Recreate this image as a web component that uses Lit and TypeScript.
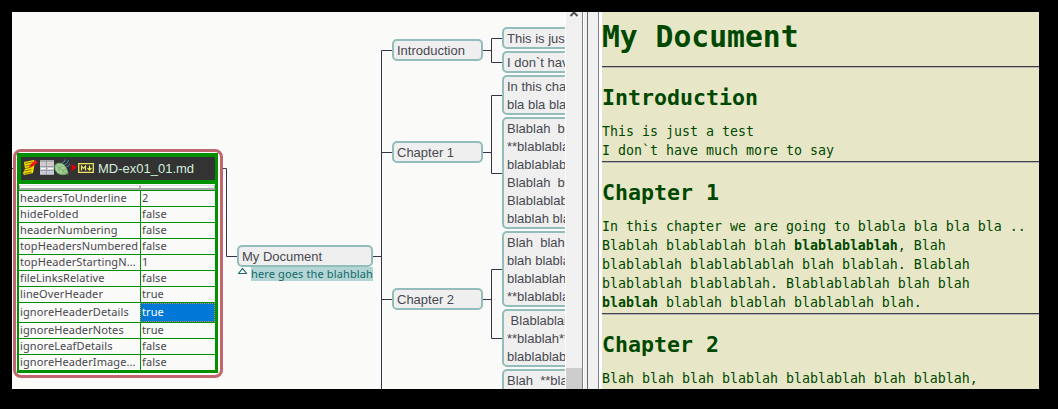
import { LitElement, html, css, svg } from "lit";
import { customElement } from "lit/decorators.js";

interface MapNode { x: number; y: number; w: number; lines: string[]; }

const NODES: MapNode[] = [
  { x: 225, y: 233, w: 136, lines: ["My Document"] },
  { x: 380, y: 27, w: 91, lines: ["Introduction"] },
  { x: 380, y: 129, w: 91, lines: ["Chapter 1"] },
  { x: 380, y: 276, w: 91, lines: ["Chapter 2"] },
  { x: 490, y: 15, w: 90, lines: ["This is just"] },
  { x: 490, y: 39, w: 90, lines: ["I don`t have"] },
  { x: 490, y: 63, w: 90, lines: ["In this chap", "bla bla bla"] },
  { x: 490, y: 105, w: 90, lines: ["Blablah  bl", "**blablabla", "blablablabl", "Blablah  bl", "Blablablab", "blablah blab"] },
  { x: 490, y: 219, w: 90, lines: ["Blah  blah", "blah blabla", "blablablah", "**blablabla"] },
  { x: 490, y: 297, w: 90, lines: [" Blablablah", "**blablah**", "blablablabl"] },
  { x: 490, y: 357, w: 90, lines: ["Blah  **bla", ""] },
];

const EDGES = [
  "M0 156.5H6", "M205 156.5H214.5V244.5H225",
  "M361 244.5H370", "M380 38.5H369.5V377", "M370 140.5H380", "M370 287.5H380",
  "M471 38.5H479", "M490 26.5H479.5V50.5H490",
  "M471 140.5H479", "M490 83.5H479.5V161.5H490",
  "M471 287.5H479", "M490 257.5H479.5V326.5H490",
];

const ATTRIBUTES: [string, string][] = [
  ["headersToUnderline", "2"], ["hideFolded", "false"], ["headerNumbering", "false"],
  ["topHeadersNumbered", "false"], ["topHeaderStartingN...", "1"], ["fileLinksRelative", "false"],
  ["lineOverHeader", "true"], ["ignoreHeaderDetails", "true"], ["ignoreHeaderNotes", "true"],
  ["ignoreLeafDetails", "false"], ["ignoreHeaderImage...", "false"],
];
const SELECTED = 7;

@customElement("file-node")
export class FileNode extends LitElement {
  static styles = css`
    :host { display: block; box-sizing: border-box; width: 210px; height: 229px; border: 3px solid #c0666f; border-radius: 8px; padding: 1px 2px 2px 1px; background: #fafaf8; font-family: "Liberation Sans", Arial, sans-serif; }
    .box { box-sizing: border-box; height: 220px; border: 2px solid #009000; border-top: 0; border-right-width: 3px; border-bottom-width: 3px; }
    .head { box-sizing: border-box; height: 31px; margin: 0 -3px 0 -2px; border: 4px solid #009000; border-right-width: 3px; background: #333; display: flex; align-items: center; color: #d3efdc; font-size: 13px; }
    .head svg { width: 77px; height: 23px; flex: none; display: block; }
    .strip { height: 6px; display: grid; grid-template-columns: 121px 1fr; }
    .strip i { border: 1px solid #aaa; border-top-color: #ddd; box-sizing: border-box; height: 5px; margin-top: 1px; border-bottom-width: 2px; background: #fff; }
    .row { display: grid; grid-template-columns: 121px 1fr; height: 15px; border-top: 1px solid #009000; font: 11px/14px "Noto Sans", sans-serif; color: #48484f; }
    .row span { padding-left: 1px; white-space: pre; letter-spacing: .1px; }
    .row .value { border-left: 1px solid #009000; }
    .selected { height: 19px; line-height: 18px; }
    .selected .value { background: #0078d7; color: #fff; outline: 1px dotted #c98f5a; outline-offset: -1px; }
  `;
  render() {
    return html`<div class="box">
      <div class="head">
        <svg viewBox="0 0 77 23">
          <path d="M3 5l10-2 1 2-2 11-9 2-1-2 2-4z" fill="#f7e200"/>
          <path d="M4 6.500l8-1.500M4.500 9l6-1.300M4 11.500l5-1M3.500 14l7-1.500M3.500 16.500l7-1.500" stroke="#4a3c00" stroke-width=".7"/>
          <path d="M8 11l1-3 5.500-5 2.500 2.500-6 4.500z" fill="#ee1515"/>
          <path d="M19 3h14v15H19z" fill="#cfcfd6"/>
          <path d="M19 3h14v2H19zM19 17h14v1H19z" fill="#a9a9ad"/>
          <path d="M19 9.500h14M19 13.500h14M25.500 3v15" stroke="#9a9aa0"/>
          <path d="M20 7h4.500M27 7h5" stroke="#e6b3b9"/><path d="M20 11.500h4.500M27 11.500h5" stroke="#fff"/><path d="M20 15.500h4.500M27 15.500h5" stroke="#b8c3ee"/>
          <path d="M34 8q3-3 7-1.500 4.500 2 6 10-6 2.500-10 0-4-3-3-8.500z" fill="#a2cf95" stroke="#6c9f64" stroke-width=".8"/>
          <path d="M35.500 8.500l12 9.500M38 10.500v4M42 13.500v3M38 10.500l4-1.500M42 13l3-1" stroke="#6a9a61" stroke-width=".6" fill="none"/>
          <path d="M44 2.500q0 3-3 3.500M47.500 3q-.5 4-4 5M49 7q-1 2-3.500 3" stroke="#4b88b0" fill="none"/>
          <path d="M50.500 7l5.500 3.500-5.500 3.500z" fill="#dc0000"/>
          <path d="M57.700 6.700h14.600v8.600H57.700z" fill="none" stroke="#efe860" stroke-width="1.300"/>
          <path d="M60.500 13.500V9l2 2.300 2-2.300v4.500M68.500 8.500v4.500M66.500 11l2 2.200 2-2.200" fill="none" stroke="#efe860" stroke-width="1.200"/>
        </svg><span>MD-ex01_01.md</span>
      </div>
      <div class="strip"><i></i><i></i></div>
      ${ATTRIBUTES.map(([k, v], i) => html`<div class="row ${i === SELECTED ? "selected" : ""}"><span>${k}</span><span class="value">${v}</span></div>`)}
    </div>`;
  }
}

@customElement("mind-map")
export class MindMap extends LitElement {
  static styles = css`
    :host { display: block; position: relative; width: 553px; height: 377px; overflow: hidden; background: #fafaf8; font: 13px/18px "Liberation Sans", Arial, sans-serif; color: #48484f; }
    .edges { position: absolute; inset: 0; width: 553px; height: 377px; }
    .edges path { fill: none; stroke: #343448; }
    .node { position: absolute; box-sizing: border-box; background: #efefef; border: 2px solid #92bdbb; border-radius: 5px; padding: 1px 3px 0; white-space: pre; }
    .node div { height: 18px; }
    .node div:last-child { height: 17px; }
    file-node { position: absolute; left: 1px; top: 137px; }
    .details { position: absolute; left: 226px; top: 255px; display: flex; color: #12686a; gap: 4px; }
    .details svg { width: 9px; height: 8px; }
    .details span { background: #b3d6d5; font: 11px/14px "Noto Sans", sans-serif; letter-spacing: .13px; width: 122px; height: 14px; white-space: nowrap; }
  `;
  render() {
    return html`
      <svg class="edges">${EDGES.map((d) => svg`<path d=${d} />`)}</svg>
      ${NODES.map((n) => html`<div class="node" style="left:${n.x}px;top:${n.y}px;width:${n.w}px">${n.lines.map((l) => html`<div>${l}</div>`)}</div>`)}
      <file-node></file-node>
      <div class="details"><svg viewBox="0 0 9 8"><path d="M.5 6.500L4.500 1.500 8.500 6.500z" fill="#fff" stroke="#12686a" stroke-width="1.100"/></svg><span>here goes the blahblah</span></div>`;
  }
}

@customElement("doc-preview")
export class DocPreview extends LitElement {
  static styles = css`
    :host { display: block; flex: 1; height: 377px; overflow: hidden; background: #e7e7c8; color: #004800; font: 13.29px/19px "DejaVu Sans Mono", monospace; white-space: pre; }
    h1 { margin: 0; font-size: 29.700px; line-height: 36px; height: 54px; padding-top: 7px; box-sizing: border-box; }
    h2 { margin: 0; font-size: 21.600px; line-height: 26px; height: 54px; padding-top: 17px; box-sizing: border-box; }
    hr { margin: 0; border: 0; height: 2px; background: linear-gradient(#404048 50%, #b4b4b4 50%); }
    p { margin: 0; }
    .short { height: 39px; }
    .long { height: 96px; }
  `;
  render() {
    return html`<h1>My Document</h1><hr><h2>Introduction</h2><p class="short">This is just a test
I don\`t have much more to say</p><hr><h2>Chapter 1</h2><p class="long">In this chapter we are going to blabla bla bla bla ..
Blablah blablablah blah <b>blablablablah</b>, Blah
blablablah blablablablah blah blablah. Blablah
blablablah blablablah. Blablablablah blah blah
<b>blablah</b> blablah blablah blablablah blah.</p><hr><h2>Chapter 2</h2><p>Blah blah blah blablah blablablah blah blablah,</p>`;
  }
}

@customElement("app-root")
export class AppRoot extends LitElement {
  static styles = css`
    :host { display: block; box-sizing: border-box; width: 1058px; height: 409px; padding: 12px 19px 20px 12px; background: #000; }
    .frame { display: flex; height: 377px; overflow: hidden; }
    .scroll { box-sizing: border-box; width: 17px; border-left: 1px solid #fff; background: #f0f0f0; display: flex; flex-direction: column; justify-content: space-between; }
    .scroll svg { width: 16px; height: 6px; }
    .thumb { height: 21px; background: #cdcdcd; }
    .divider { box-sizing: border-box; width: 17px; border-left: 1px solid #7a818c; border-right: 1px solid #7a818c; background: linear-gradient(90deg, #fff 0 1px, #f0f0f0 1px 4px, #696969 4px 5px, #f0f0f0 5px); }
    .gutter { width: 3px; background: #fff; }
  `;
  render() {
    return html`<div class="frame">
      <mind-map></mind-map>
      <div class="scroll"><svg viewBox="0 0 16 6"><path d="M4.500 4L8 .5 11.500 4" fill="none" stroke="#505050" stroke-width="2"/></svg><div class="thumb"></div></div>
      <div class="divider"></div><div class="gutter"></div>
      <doc-preview></doc-preview>
    </div>`;
  }
}
